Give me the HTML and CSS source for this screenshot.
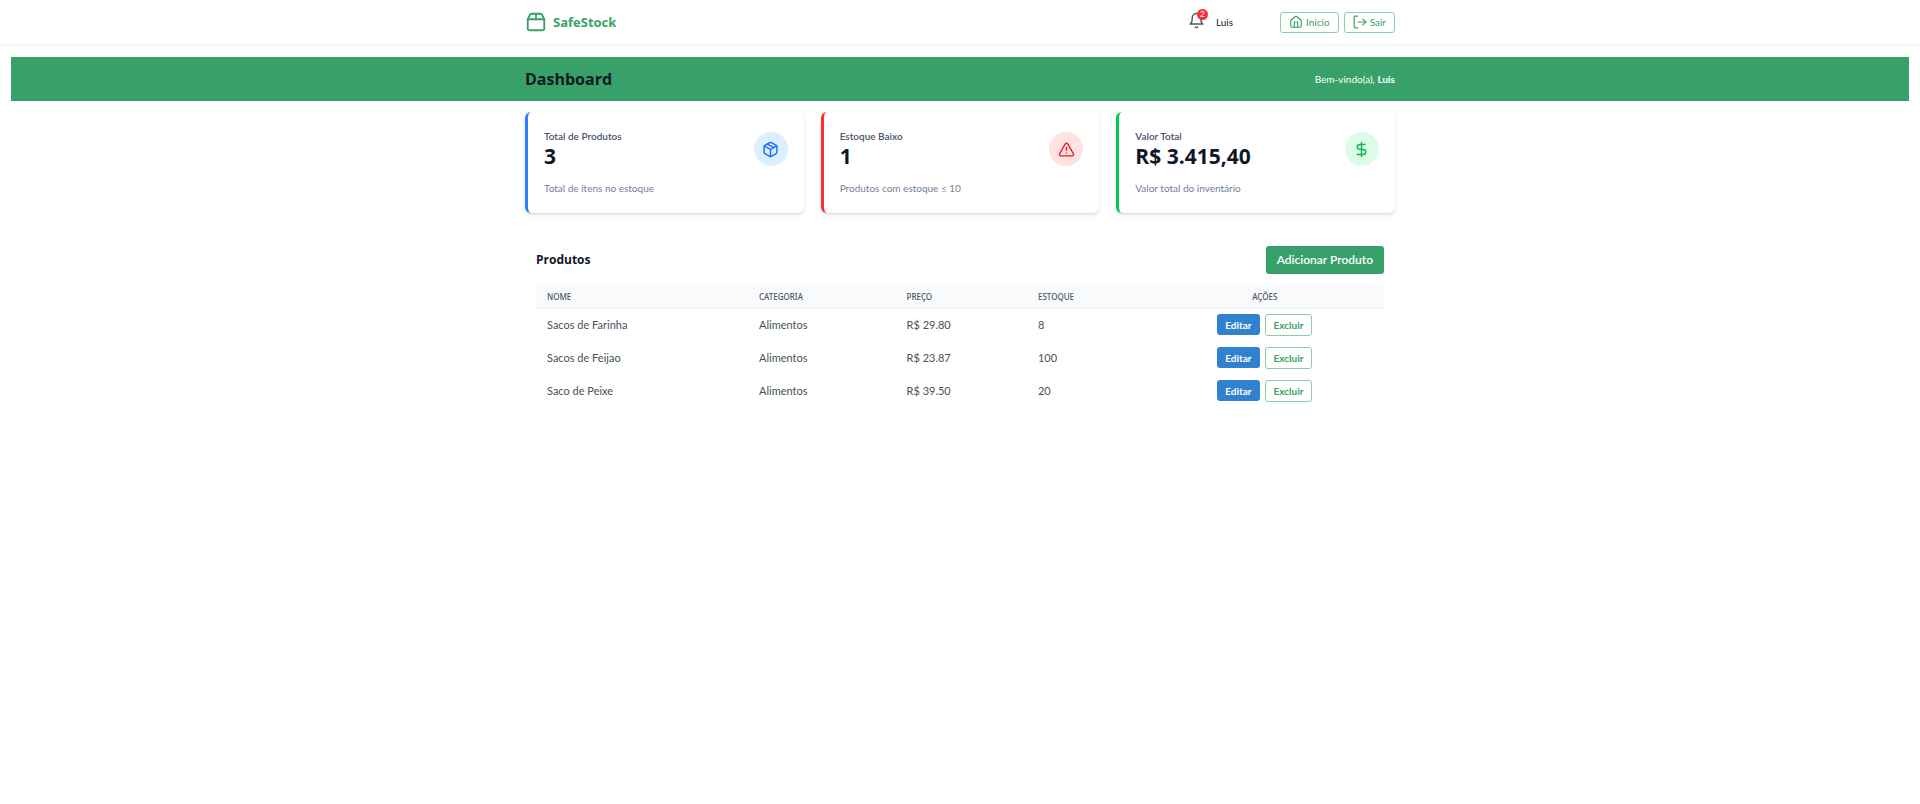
FILE: index.html
```html
<!DOCTYPE html>
<html lang="pt-BR">
<head>
    <meta charset="UTF-8">
    <meta name="viewport" content="width=device-width, initial-scale=1.0">
    <title>SafeStock</title>
    <link rel="stylesheet" href="styles.css">
</head>
<body>
    <header class="topbar">
        <div class="container topbar-inner">
            <a href="#" class="brand">
                <svg class="icon brand-icon" viewBox="0 0 24 24">
                    <path d="M3 9h18v10a2 2 0 0 1-2 2H5a2 2 0 0 1-2-2V9Z"/>
                    <path d="m3 9 2.45-4.9A2 2 0 0 1 7.24 3h9.52a2 2 0 0 1 1.8 1.1L21 9"/>
                    <path d="M12 3v6"/>
                </svg>
                SafeStock
            </a>
            <div class="topbar-right">
                <div class="user">
                    <button type="button" class="bell" aria-label="Notificações">
                        <svg class="icon" viewBox="0 0 24 24">
                            <path d="M10.3 21a1.94 1.94 0 0 0 3.4 0"/>
                            <path d="M6 8a6 6 0 0 1 12 0c0 7 3 9 3 9H3s3-2 3-9"/>
                        </svg>
                        <span class="badge">2</span>
                    </button>
                    <span>Luis</span>
                </div>
                <nav class="nav">
                    <a href="#" class="btn btn-outline btn-nav">
                        <svg class="icon nav-icon" viewBox="0 0 24 24">
                            <path d="M15 21v-8a1 1 0 0 0-1-1h-4a1 1 0 0 0-1 1v8"/>
                            <path d="M3 10a2 2 0 0 1 .709-1.528l7-5.999a2 2 0 0 1 2.582 0l7 5.999A2 2 0 0 1 21 10v9a2 2 0 0 1-2 2H5a2 2 0 0 1-2-2z"/>
                        </svg>
                        Início
                    </a>
                    <button type="button" class="btn btn-outline btn-nav">
                        <svg class="icon nav-icon" viewBox="0 0 24 24">
                            <path d="M8 22H4a2 2 0 0 1-2-2V4a2 2 0 0 1 2-2h4"/>
                            <path d="m17 17 5-5-5-5"/>
                            <path d="M22 12H9"/>
                        </svg>
                        Sair
                    </button>
                </nav>
            </div>
        </div>
    </header>

    <main class="page">
        <div class="banner">
            <div class="container banner-inner">
                <h1>Dashboard</h1>
                <p>Bem-vindo(a), <b>Luis</b></p>
            </div>
        </div>

        <div class="container">
            <section class="cards">
                <div class="card blue">
                    <div class="card-top">
                        <div>
                            <p class="card-label">Total de Produtos</p>
                            <p class="card-value">3</p>
                        </div>
                        <div class="card-icon">
                            <svg class="icon" viewBox="0 0 24 24">
                                <path d="m7.5 4.27 9 5.15"/>
                                <path d="M21 8a2 2 0 0 0-1-1.73l-7-4a2 2 0 0 0-2 0l-7 4A2 2 0 0 0 3 8v8a2 2 0 0 0 1 1.73l7 4a2 2 0 0 0 2 0l7-4A2 2 0 0 0 21 16Z"/>
                                <path d="m3.3 7 8.7 5 8.7-5"/>
                                <path d="M12 22V12"/>
                            </svg>
                        </div>
                    </div>
                    <p class="card-note">Total de itens no estoque</p>
                </div>

                <div class="card red">
                    <div class="card-top">
                        <div>
                            <p class="card-label">Estoque Baixo</p>
                            <p class="card-value">1</p>
                        </div>
                        <div class="card-icon">
                            <svg class="icon" viewBox="0 0 24 24">
                                <path d="m21.73 18-8-14a2 2 0 0 0-3.48 0l-8 14A2 2 0 0 0 4 21h16a2 2 0 0 0 1.73-3"/>
                                <path d="M12 9v4"/>
                                <path d="M12 17h.01"/>
                            </svg>
                        </div>
                    </div>
                    <p class="card-note">Produtos com estoque ≤ 10</p>
                </div>

                <div class="card green">
                    <div class="card-top">
                        <div>
                            <p class="card-label">Valor Total</p>
                            <p class="card-value">R$ 3.415,40</p>
                        </div>
                        <div class="card-icon">
                            <svg class="icon" viewBox="0 0 24 24">
                                <path d="M12 2v20"/>
                                <path d="M17 5H9.500a3.500 3.500 0 0 0 0 7h5a3.500 3.500 0 0 1 0 7H6"/>
                            </svg>
                        </div>
                    </div>
                    <p class="card-note">Valor total do inventário</p>
                </div>
            </section>

            <section class="products">
                <div class="products-head">
                    <h2>Produtos</h2>
                    <button type="button" class="btn btn-add">Adicionar Produto</button>
                </div>
                <table class="table">
                    <thead>
                        <tr>
                            <th class="col-name">Nome</th>
                            <th class="col-category">Categoria</th>
                            <th class="col-price">Preço</th>
                            <th class="col-stock">Estoque</th>
                            <th class="col-actions">Ações</th>
                        </tr>
                    </thead>
                    <tbody>
                        <tr>
                            <td>Sacos de Farinha</td>
                            <td>Alimentos</td>
                            <td>R$ 29.80</td>
                            <td>8</td>
                            <td>
                                <div class="actions">
                                    <button type="button" class="btn btn-edit">Editar</button>
                                    <button type="button" class="btn btn-outline btn-delete">Excluir</button>
                                </div>
                            </td>
                        </tr>
                        <tr>
                            <td>Sacos de Feijao</td>
                            <td>Alimentos</td>
                            <td>R$ 23.87</td>
                            <td>100</td>
                            <td>
                                <div class="actions">
                                    <button type="button" class="btn btn-edit">Editar</button>
                                    <button type="button" class="btn btn-outline btn-delete">Excluir</button>
                                </div>
                            </td>
                        </tr>
                        <tr>
                            <td>Saco de Peixe</td>
                            <td>Alimentos</td>
                            <td>R$ 39.50</td>
                            <td>20</td>
                            <td>
                                <div class="actions">
                                    <button type="button" class="btn btn-edit">Editar</button>
                                    <button type="button" class="btn btn-outline btn-delete">Excluir</button>
                                </div>
                            </td>
                        </tr>
                    </tbody>
                </table>
            </section>
        </div>
    </main>
</body>
</html>
```

FILE: styles.css
```css
* {
    box-sizing: border-box;
    margin: 0;
    padding: 0;
}

body {
    font-family: "Segoe UI", Lato, sans-serif;
    font-size: 10px;
    line-height: 16px;
    color: #1a202c;
    background: #ffffff;
}

a {
    color: inherit;
    text-decoration: none;
}

.container {
    width: 100%;
    max-width: 870px;
    margin: 0 auto;
}

.icon {
    display: block;
    width: 17px;
    height: 17px;
    fill: none;
    stroke: currentColor;
    stroke-width: 2;
    stroke-linecap: round;
    stroke-linejoin: round;
}

/* buttons */
.btn {
    display: flex;
    align-items: center;
    justify-content: center;
    font-family: inherit;
    font-size: 10px;
    font-weight: 700;
    line-height: 14px;
    border: 0;
    border-radius: 3px;
    cursor: pointer;
}

.btn-outline {
    color: #38a169;
    background: #ffffff;
    border: 1px solid #8fcbaa;
}

.btn-nav {
    gap: 3px;
    height: 21px;
    padding: 0 8px;
    font-weight: 400;
}

.btn-add {
    height: 28px;
    padding: 0 11px;
    font-size: 12px;
    font-weight: 600;
    color: #ffffff;
    background: #38a169;
}

.btn-edit {
    height: 21px;
    padding: 0 8px;
    color: #ffffff;
    background: #3182ce;
}

.btn-delete {
    height: 22px;
    padding: 0 8px;
}

/* top bar */
.topbar {
    padding: 11px 0;
    border-bottom: 2px solid #f3f7f8;
}

.topbar-inner,
.topbar-right,
.user,
.nav,
.brand {
    display: flex;
    align-items: center;
}

.topbar-inner {
    justify-content: space-between;
}

.topbar-right {
    gap: 47px;
}

.user {
    gap: 11px;
}

.nav {
    gap: 5px;
}

.brand,
.banner h1,
.card-value,
.products-head h2 {
    font-family: "Segoe UI", "Open Sans", sans-serif;
}

.brand {
    gap: 6px;
    font-size: 13px;
    font-weight: 700;
    color: #38a169;
}

.brand-icon {
    width: 22px;
    height: 22px;
}

.bell {
    position: relative;
    padding-bottom: 3px;
    color: #4a5568;
    background: none;
    border: 0;
    cursor: pointer;
}

.badge {
    position: absolute;
    top: -3px;
    right: -3px;
    width: 11px;
    height: 11px;
    font-size: 9px;
    line-height: 11px;
    text-align: center;
    color: #ffffff;
    background: #fb2c36;
    border-radius: 50%;
}

.nav-icon {
    width: 14px;
    height: 14px;
}

/* banner */
.page {
    padding: 11px;
}

.banner {
    padding: 11px 0;
    color: #ffffff;
    background: #38a169;
}

.banner-inner {
    display: flex;
    align-items: center;
    justify-content: space-between;
}

.banner h1 {
    font-size: 16px;
    line-height: 22px;
    color: #111827;
}

/* summary cards */
.cards {
    display: grid;
    grid-template-columns: repeat(3, 1fr);
    gap: 17px;
    padding-top: 11px;
}

.card {
    padding: 17px 16px;
    background: #ffffff;
    border-left: 3px solid;
    border-radius: 6px;
    box-shadow: 0 2px 4px rgba(0, 0, 0, 0.1), 0 1px 1px rgba(0, 0, 0, 0.08);
}

.card-top {
    display: flex;
    align-items: center;
    justify-content: space-between;
    margin-bottom: 11px;
}

.card-label {
    line-height: 15px;
    font-weight: 600;
    color: #4a5568;
}

.card-value {
    font-size: 21px;
    line-height: 25px;
    font-weight: 700;
    color: #101828;
}

.card-note {
    color: #718096;
}

.card-icon {
    display: grid;
    place-items: center;
    width: 34px;
    height: 34px;
    border-radius: 50%;
}

.blue {
    border-color: #2b7fff;
}

.blue .card-icon {
    color: #1a6dff;
    background: #dbeffe;
}

.red {
    border-color: #fb2c36;
}

.red .card-icon {
    color: #f01a24;
    background: #ffe2e2;
}

.green {
    border-color: #00c950;
}

.green .card-icon {
    color: #16b155;
    background: #dcfce7;
}

/* product list */
.products {
    margin-top: 22px;
    padding: 11px;
}

.products-head {
    display: flex;
    align-items: center;
    justify-content: space-between;
    margin-bottom: 11px;
}

.products-head h2 {
    font-size: 12px;
    color: #111827;
}

.table {
    width: 100%;
    table-layout: fixed;
    border-collapse: collapse;
}

.table th {
    height: 23px;
    padding: 1px 11px 0;
    font-family: "Segoe UI", "Noto Sans", sans-serif;
    font-size: 8px;
    font-weight: 500;
    text-align: left;
    text-transform: uppercase;
    color: #4a5568;
    background: #f9fafb;
    border-bottom: 1px solid #edf2f7;
}

.table td {
    height: 33px;
    padding: 0 11px;
    font-size: 11px;
    color: #4a5055;
}

.col-name {
    width: 25%;
}

.col-category {
    width: 17.4%;
}

.col-price {
    width: 15.5%;
}

.col-stock {
    width: 14%;
}

.table .col-actions {
    text-align: center;
}

.actions {
    display: flex;
    align-items: center;
    justify-content: center;
    gap: 5px;
}
```
